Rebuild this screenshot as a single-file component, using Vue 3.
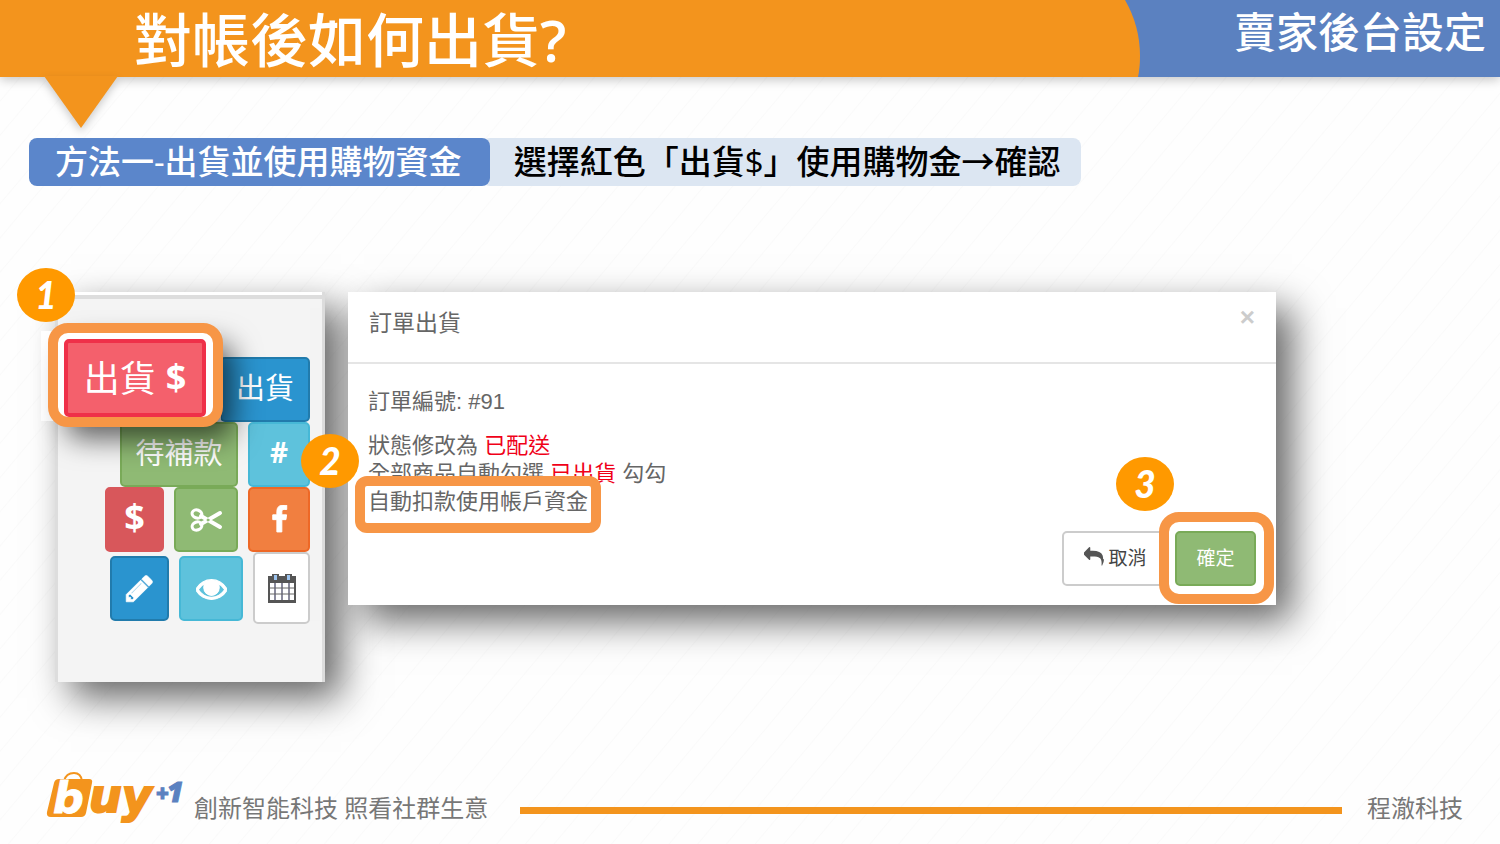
<script setup>
const icons = {
  pencil: 'M491 1536l91-91-235-235-91 91v107h128v128h107zm523-928q0-22-22-22-10 0-17 7l-542 542q-7 7-7 17 0 22 22 22 10 0 17-7l542-542q7-7 7-17zm-54-192l416 416-832 832h-416v-416zm683 96q0 53-37 90l-166 166-416-416 166-165q36-38 90-38 53 0 91 38l235 234q37 39 37 91z',
  eye: 'M1664 960q-152-236-381-353 61 104 61 225 0 185-131.5 316.5t-316.5 131.5-316.5-131.5-131.5-316.5q0-121 61-225-229 117-381 353 133 205 333.5 326.5t434.5 121.5 434.5-121.5 333.5-326.5zm128 0q0 34-20 69-140 230-376.5 368.5t-499.5 138.5-499.5-139-376.5-368q-20-35-20-69t20-69q140-229 376.5-368t499.5-139 499.5 139 376.5 368q20 35 20 69z',
  reply: 'M1792 1120q0 166-127 451-3 7-10.5 24t-13.5 30-13 22q-12 17-28 17-15 0-23.5-10t-8.5-25q0-9 2.5-26.5t2.5-23.5q5-68 5-123 0-112-19.5-200.5t-54-153-89-110.5-120-78-149.5-44.5-172.5-21.5-187.5-6h-224v256q0 26-19 45t-45 19-45-19l-512-512q-19-19-19-45t19-45l512-512q19-19 45-19t45 19 19 45v256h224q713 0 875 403 53 134 53 333z',
  facebook: 'M1343 12v264h-157q-86 0-116 36t-30 108v189h293l-39 296h-254v759h-306v-759h-255v-296h255v-218q0-186 104-288.5t277-102.5q147 0 228 12z'
}
</script>

<template>
  <div class="slide">
    <header class="top">
      <div class="top-main">
        <h1>對帳後如何出貨<b>?</b></h1>
      </div>
      <svg class="top-cap" width="30" height="77" viewBox="0 0 30 77" aria-hidden="true">
        <path d="M0 0H15Q30 26 30 56Q30 68 28 77H0Z" fill="#f3941d" />
      </svg>
      <p class="top-section">賣家後台設定</p>
      <svg class="pointer" width="74" height="52" viewBox="0 0 74 52" aria-hidden="true">
        <path d="M0 0H74L37 52Z" fill="#f3941d" />
      </svg>
    </header>

    <main>
      <h2 class="method">
        <span class="method-name">方法一-出貨並使用購物資金</span>
        <span class="method-text">選擇紅色「出貨$」使用購物金→確認</span>
      </h2>

      <div class="stage">
        <section class="panel" aria-label="訂單操作">
          <div class="row">
            <button class="btn blue ship">出貨</button>
          </div>
          <div class="row">
            <button class="btn green pending">待補款</button>
            <button class="btn cyan w62 sign">#</button>
          </div>
          <div class="row">
            <button class="btn red w59 sign dollar">$</button>
            <button class="btn green w64" aria-label="剪下">
              <svg width="34" height="26" viewBox="0 0 34 26" fill="none" stroke="#fff" stroke-linecap="round">
                <ellipse cx="8" cy="7" rx="5" ry="4" stroke-width="3" transform="rotate(20 8 7)" />
                <ellipse cx="8" cy="19" rx="5" ry="4" stroke-width="3" transform="rotate(-20 8 19)" />
                <path d="M12 9L31 20M12 17L31 6" stroke-width="4" />
                <circle cx="19" cy="13" r="1" fill="#8fba74" stroke="#8fba74" stroke-width="1" />
              </svg>
            </button>
            <button class="btn orange w62" aria-label="Facebook">
              <svg width="29" height="29" viewBox="0 0 1792 1792"><path :d="icons.facebook" fill="#fff" stroke="#fff" stroke-width="60" /></svg>
            </button>
          </div>
          <div class="row">
            <button class="btn blue w59" aria-label="編輯">
              <svg width="31" height="31" viewBox="0 0 1792 1792"><path :d="icons.pencil" fill="#fff" stroke="#fff" stroke-width="40" /></svg>
            </button>
            <button class="btn cyan w64" aria-label="檢視">
              <svg width="31" height="31" viewBox="0 0 1792 1792">
                <path :d="icons.eye" fill="#fff" stroke="#fff" stroke-width="60" />
                <circle cx="896" cy="880" r="440" fill="#fff" />
              </svg>
            </button>
            <button class="btn white calendar" aria-label="行事曆">
              <svg width="28" height="30" viewBox="0 0 28 30">
                <path d="M1 4H27V29H1Z" fill="#fff" stroke="#555" stroke-width="2" />
                <path d="M0 3H28V10H0ZM0 27H28V30H0Z" fill="#555" />
                <path d="M7 10V27M14 10V27M21 10V27" stroke="#8a8a9c" stroke-width="2" />
                <path d="M2 15H26M2 21H26" stroke="#666" stroke-width="1" />
                <path d="M4 1H11V7H4ZM17 1H24V7H17Z" fill="#555" />
                <path d="M6 2H9V7H6ZM19 2H22V7H19Z" fill="#9cc3ee" />
              </svg>
            </button>
          </div>

          <div class="zoomed">
            <div class="frame frame-ship">
              <button class="btn crimson">出貨 <b>$</b></button>
            </div>
          </div>
          <span class="step step-1">1</span>
          <span class="step step-2">2</span>
        </section>

        <section class="dialog" role="dialog" aria-labelledby="dialog-title">
          <div class="dialog-head">
            <h3 id="dialog-title">訂單出貨</h3>
            <button class="close" aria-label="關閉">×</button>
          </div>
          <div class="dialog-body">
            <p class="order">訂單編號: #91</p>
            <p>狀態修改為 <em>已配送</em></p>
            <p>全部商品自動勾選 <em>已出貨</em> 勾勾</p>
            <p class="marked">自動扣款使用帳戶資金<span class="frame frame-note"></span></p>
          </div>
          <div class="dialog-actions">
            <button class="btn white cancel">
              <svg width="20" height="20" viewBox="0 0 1792 1792"><path :d="icons.reply" fill="#555" /></svg>
              取消
            </button>
            <div class="confirm-wrap">
              <button class="btn green confirm">確定</button>
              <span class="frame frame-confirm"></span>
              <span class="step step-3">3</span>
            </div>
          </div>
        </section>
      </div>
    </main>

    <footer class="bottom">
      <svg class="logo" width="136" height="54" viewBox="0 0 136 54" role="img" aria-label="buy+1">
        <path d="M18 11Q20 3 28 3Q35 3 36 11" fill="none" stroke="#f3941d" stroke-width="2" />
        <path d="M13 9H43Q47 9 46 13L40 43Q39 47 35 47H5Q0 47 1 42L8 13Q9 9 13 9Z" fill="#f3941d" />
        <text x="7" y="43" class="logo-b">b</text>
        <text x="43" y="42" class="logo-uy">uy</text>
        <text x="110" y="32" class="logo-plus">+</text>
        <text x="121" y="32" class="logo-one">1</text>
      </svg>
      <p class="slogan">創新智能科技 照看社群生意</p>
      <div class="rule"></div>
      <p class="company">程澈科技</p>
    </footer>
  </div>
</template>

<style>
body {
  margin: 0;
}
</style>

<style scoped>
.slide {
  display: flex;
  flex-direction: column;
  min-height: 100vh;
  overflow: hidden;
  background: repeating-linear-gradient(130deg, #fefefe 0, #fefefe 20px, #fafafa 21px, #fefefe 22px);
  font-family: "Open Sans", "Noto Sans CJK TC", sans-serif;
}
h1, h2, h3, p {
  margin: 0;
  font-weight: 500;
}
.top {
  position: relative;
  display: flex;
  height: 77px;
  background: #5b81c0;
  box-shadow: 0 3px 10px rgba(0, 0, 0, 0.22);
  color: #fff;
}
.top-main {
  flex: 0 0 74%;
  background: #f3941d;
}
h1 {
  padding-left: 134px;
  font-size: 58px;
  line-height: 80px;
}
h1 b { font-weight: 600; }
.top-section {
  flex: 1;
  padding-right: 14px;
  font-size: 42px;
  line-height: 64px;
  text-align: right;
}
.pointer {
  position: absolute;
  top: 76px;
  left: 44px;
  overflow: visible;
  filter: drop-shadow(0 4px 4px rgba(0, 0, 0, 0.2));
}
.method {
  display: flex;
  margin: 61px 29px 0;
  font-size: 33px;
  line-height: 48px;
  white-space: nowrap;
}
.method-name {
  z-index: 1;
  padding: 0 28px 0 26px;
  border-radius: 8px;
  background: #5b86cb;
  color: #fff;
}
.method-text {
  margin-left: -8px;
  padding: 0 20px 0 32px;
  border-radius: 8px;
  background: #dce6f2;
  color: #000;
}
.stage {
  display: flex;
  align-items: flex-start;
  gap: 23px;
  margin: 106px 224px 0 55px;
}
.panel {
  position: relative;
  box-sizing: border-box;
  flex: 0 0 270px;
  padding: 65px 12px 58px 0;
  border: solid #ddd;
  border-width: 0 3px;
  background: linear-gradient(#fff 3px, #ddd 3px, #ddd 7px, #f4f4f4 7px);
  box-shadow: 16px 16px 36px rgba(0, 0, 0, 0.6);
}
.row {
  display: flex;
  align-items: center;
  justify-content: flex-end;
  gap: 10px;
}
.btn {
  display: flex;
  align-items: center;
  justify-content: center;
  box-sizing: border-box;
  height: 65px;
  padding: 0;
  border: 2px solid;
  border-radius: 5px;
  color: #fff;
  font-family: "Liberation Sans", "Noto Sans CJK TC", sans-serif;
  font-size: 29px;
  font-weight: 400;
  white-space: nowrap;
}
.blue { background: #2a94cf; border-color: #217bac; }
.green { background: #8fba74; border-color: #79aa58; }
.cyan { background: #5ec2dc; border-color: #46b8d6; }
.red { background: #d8575b; border-color: #d8575b; }
.orange { background: #f17f40; border-color: #ee6826; }
.white { background: #fff; border-color: #ccc; }
.crimson {
  width: 142px;
  height: 78px;
  padding-bottom: 4px;
  border: 4px solid #ef3049;
  background: #f4606c;
  font-size: 36px;
  gap: 10px;
}
.ship { width: 90px; }
.pending { width: 118px; }
.ship,
.pending { padding-bottom: 8px; }
.sign { padding-bottom: 6px; }
.w59 { width: 59px; }
.w62 { width: 62px; }
.w64 { width: 64px; }
.sign {
  font-family: "Open Sans", sans-serif;
  font-size: 28px;
  font-weight: 700;
}
.dollar { font-size: 36px; }
.crimson b {
  font-family: "Open Sans", sans-serif;
  font-weight: 700;
}
.calendar {
  width: 57px;
  height: 72px;
}
.zoomed {
  position: absolute;
  top: 39px;
  left: -17px;
  width: 180px;
  height: 90px;
  background: #fff;
}
.frame {
  position: absolute;
  box-sizing: border-box;
  border: 10px solid #f79646;
  border-radius: 20px;
}
.frame-ship {
  top: -8px;
  left: 7px;
  width: 175px;
  padding: 6px 6px 0;
  background: #fff;
  box-shadow: 14px 16px 28px -4px rgba(0, 0, 0, 0.6);
}
.step {
  position: absolute;
  z-index: 2;
  width: 58px;
  height: 54px;
  border-radius: 50%;
  background: #f90;
  color: #fff;
  font: italic 900 37px/54px Lato, sans-serif;
  text-align: center;
}
.step-1 { top: -24px; left: -41px; }
.step-2 { top: 142px; left: 243px; }
.step-3 { top: -74px; left: -59px; }
.dialog {
  position: relative;
  flex: 1;
  background: #fff;
  box-shadow: 16px 16px 36px rgba(0, 0, 0, 0.6);
  color: #666;
  font-family: "Liberation Sans", "Noto Sans CJK TC", sans-serif;
}
.dialog-head {
  display: flex;
  align-items: flex-start;
  justify-content: space-between;
  box-sizing: border-box;
  height: 72px;
  padding: 10px 21px 0;
  border-bottom: 2px solid #e5e5e5;
}
h3 {
  font-size: 23px;
  font-weight: 400;
  line-height: 42px;
}
.close {
  padding: 0;
  border: 0;
  background: none;
  color: #ccc;
  font: 700 26px/30px "Liberation Sans", sans-serif;
}
.dialog-body {
  padding: 24px 20px 0;
  font-size: 22px;
  line-height: 28px;
}
.dialog-body p { font-weight: 400; }
.dialog-body .order { margin-bottom: 16px; }
.dialog-body em {
  color: #f00018;
  font-style: normal;
}
.marked {
  position: relative;
  width: max-content;
}
.frame-note {
  top: -12px;
  left: -13px;
  width: 246px;
  height: 57px;
  border-radius: 12px;
}
.dialog-actions {
  display: flex;
  justify-content: flex-end;
  gap: 6px;
  padding: 15px 20px 19px;
}
.cancel,
.confirm {
  height: 55px;
  padding-bottom: 4px;
  font-size: 19px;
}
.cancel {
  gap: 4px;
  width: 107px;
  color: #444;
}
.confirm { width: 81px; }
.confirm-wrap { position: relative; }
.frame-confirm {
  top: -19px;
  left: -16px;
  width: 115px;
  height: 92px;
}
.bottom {
  display: flex;
  align-items: flex-end;
  margin-top: auto;
  padding: 0 37px 20px 46px;
  color: #777;
  font-size: 24px;
  line-height: 32px;
}
.bottom p { font-weight: 400; }
.logo {
  overflow: visible;
  margin-right: 12px;
}
.logo-b,
.logo-uy {
  font: italic 700 46px "DejaVu Sans", sans-serif;
  fill: #f3941d;
  stroke: #f3941d;
  stroke-width: 2px;
}
.logo-b {
  font-size: 43px;
  fill: #fff;
  stroke: #fff;
  stroke-width: 1px;
}
.logo-plus,
.logo-one {
  font: italic 800 22px "Open Sans", sans-serif;
  fill: #5b81c0;
  stroke: #5b81c0;
  stroke-width: 1px;
}
.logo-one { font-size: 28px; }
.rule {
  flex: 1;
  height: 7px;
  margin: 0 25px 10px 32px;
  background: #f3941d;
}
</style>
